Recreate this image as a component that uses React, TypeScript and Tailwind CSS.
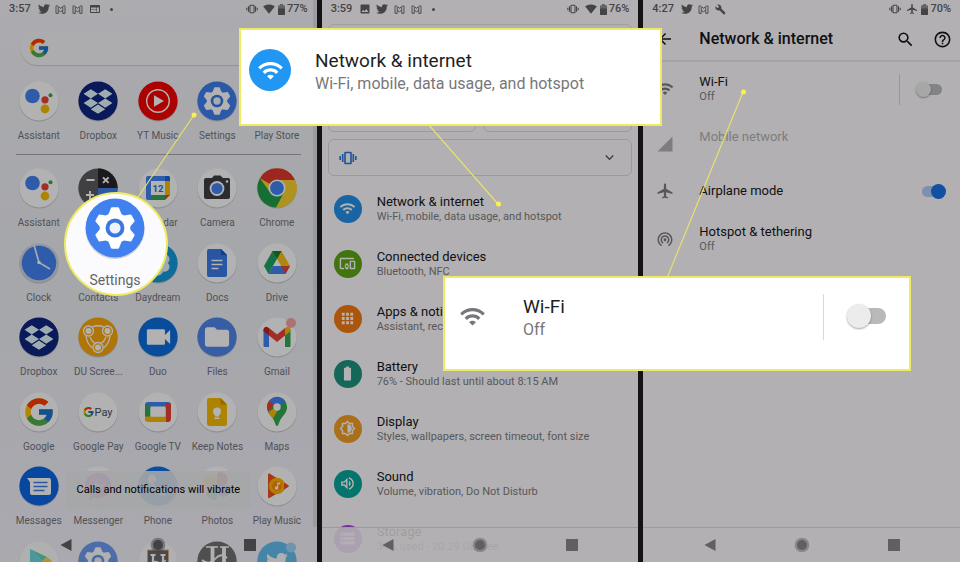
import React from 'react';
import { FaDropbox, FaTwitter } from 'react-icons/fa';
import { FcGoogle } from 'react-icons/fc';
import {
  MdAirplanemodeActive,
  MdApps,
  MdArrowBack,
  MdBatteryFull,
  MdBuild,
  MdDevicesOther,
  MdFolder,
  MdHelpOutline,
  MdImage,
  MdKeyboardArrowDown,
  MdOutlineBrightnessMedium,
  MdOutlineVolumeUp,
  MdSearch,
  MdSignalCellular4Bar,
  MdSignalWifi4Bar,
  MdStorage,
  MdVideocam,
  MdWeb,
  MdWifi,
  MdWifiTethering,
} from 'react-icons/md';

/* ---------- launcher icons, all on a 40x40 grid ---------- */

const Disc = ({ fill = '#ffffff', children }: { fill?: string; children?: React.ReactNode }) => (
  <svg viewBox="0 0 40 40" className="size-full overflow-visible" aria-hidden="true">
    <circle cx="20" cy="20.8" r="19.8" fill="#000" opacity="0.16" />
    <circle cx="20" cy="20" r="19.6" fill={fill} />
    {children}
  </svg>
);

const AssistantIcon = () => (
  <Disc>
    <circle cx="13.5" cy="15" r="7.3" fill="#4285f4" />
    <circle cx="26" cy="18.8" r="3.6" fill="#ea4335" />
    <circle cx="31.5" cy="14.3" r="2" fill="#34a853" />
    <circle cx="26" cy="28" r="4.4" fill="#fbbc04" />
  </Disc>
);

const DropboxIcon = () => (
  <Disc fill="#0d2481">
    <FaDropbox x="5.5" y="6" size={29} color="#e3f7ff" />
  </Disc>
);

const YtMusicIcon = () => (
  <Disc fill="#f80000">
    <circle cx="20" cy="20" r="11.3" fill="none" stroke="#fff" strokeWidth="1.4" />
    <path d="M16 14.2 26 20l-10 5.8z" fill="#fff" />
  </Disc>
);

const SettingsIcon = () => (
  <Disc fill="#4080ef">
    <g fill="#fff">
      <circle cx="20" cy="20" r="10.2" />
      {[0, 60, 120, 180, 240, 300].map((angle) => (
        <path key={angle} d="M15.4 11.5 17.3 6.6Q17.5 6.2 18 6.2h4Q22.5 6.2 22.7 6.6L24.6 11.5z" transform={`rotate(${angle} 20 20)`} />
      ))}
    </g>
    <circle cx="20" cy="20" r="6.3" fill="#3a78e0" />
    <circle cx="20" cy="20" r="3.7" fill="#eef3fd" />
  </Disc>
);

const PlayStoreIcon = () => (
  <Disc>
    <path d="M11 8v24l12-12z" fill="#3fd0d8" />
    <path d="M11 8l12 12 5-4z" fill="#32c8a0" />
    <path d="M11 32l12-12 5 4z" fill="#ff3b47" />
    <path d="M28 16l-5 4 5 4 5-4z" fill="#ffc900" />
  </Disc>
);

const CalculatorIcon = () => (
  <Disc fill="#5c5c60">
    <path d="M20 .4A19.6 19.6 0 0 1 39.6 20H20z" fill="#26262a" />
    <path d="M39.6 20A19.6 19.6 0 0 1 20 39.6V20z" fill="#3f7fee" />
    <g stroke="#fff" strokeWidth="1.9">
      <path d="M8.5 12h8M12 23v8M8 27h8" />
      <path d="M25 9.3l5.6 5.6M30.6 9.3 25 14.9" />
    </g>
  </Disc>
);

const CalendarIcon = () => (
  <Disc>
    <path d="M8 10q0-2 2-2h20q2 0 2 2v4H8z" fill="#4285f4" />
    <path d="M8 13h5v19h-3q-2 0-2-2z" fill="#4285f4" />
    <path d="M27 13h5v14h-5z" fill="#fbbc04" />
    <path d="M27 8h3q2 0 2 2v3h-5z" fill="#1967d2" />
    <path d="M13 27h14v5H13z" fill="#34a853" />
    <path d="M27 27h5l-5 5z" fill="#ea4335" />
    <path d="M13 13h14v14H13z" fill="#fff" />
    <text x="20" y="23.5" fontSize="9.5" fontWeight="700" textAnchor="middle" fill="#1a73e8">12</text>
  </Disc>
);

const CameraIcon = () => (
  <Disc>
    <path d="M15 10l2-2.5h6.5L26 10h5.5Q33 10 33 12v17q0 2-2 2H9q-2 0-2-2V12q0-2 2-2z" fill="#3d4045" />
    <circle cx="20" cy="20.5" r="7.4" fill="#fff" />
    <circle cx="20" cy="20.5" r="5.6" fill="#4285f4" />
    <circle cx="30" cy="13.5" r="1.3" fill="#fff" />
  </Disc>
);

const ChromeIcon = () => (
  <Disc fill="#fdd22f">
    <path d="M20 20 3 10.2A19.6 19.6 0 0 1 37 10.2L38 12H20z" fill="#e0392c" />
    <path d="M3 10.2A19.6 19.6 0 0 0 19 39.6L27.4 25 20 20 12 23z" fill="#1fa04a" />
    <path d="M20 12h18.2A19.6 19.6 0 0 1 19.500 39.6L27 24z" fill="#fdd22f" />
    <circle cx="20" cy="20" r="8.6" fill="#fff" />
    <circle cx="20" cy="20" r="6.9" fill="#4285f4" />
  </Disc>
);

const ClockIcon = () => (
  <Disc fill="#d3d8e2">
    <circle cx="20" cy="20" r="17.3" fill="#4285f4" />
    <path d="M15 2l5 17.5L31 26" fill="none" stroke="#eef2fb" strokeWidth="1.7" />
    <circle cx="20" cy="19.5" r="1.8" fill="#fff" />
  </Disc>
);

const ContactsIcon = () => (
  <Disc fill="#4285f4">
    <circle cx="20" cy="15" r="6" fill="#fff" />
    <path d="M9 30q0-8 11-8t11 8z" fill="#fff" />
  </Disc>
);

const DaydreamIcon = () => (
  <Disc fill="#159be0">
    {[0, 60, 120, 180, 240, 300].map((angle) => (
      <circle key={angle} cx="20" cy="12.5" r="5" fill="#e6f5fd" transform={`rotate(${angle} 20 20)`} />
    ))}
    <circle cx="20" cy="20" r="6" fill="#bfe4f8" />
  </Disc>
);

const DocsIcon = () => (
  <Disc>
    <path d="M10 8q0-2 2-2h12l6 6v20q0 2-2 2H12q-2 0-2-2z" fill="#3a7be8" />
    <path d="M24 6l6 6h-6z" fill="#1a56c0" />
    <path d="M14.5 17.5h11M14.5 21.5h11M14.5 25.5h7" stroke="#fff" strokeWidth="1.6" />
  </Disc>
);

const DriveIcon = () => (
  <Disc>
    <path d="M15.5 8h9L20 16 11.5 31 7 23z" fill="#1fa463" />
    <path d="M15.5 8h9L33 23h-9z" fill="#fbc116" />
    <path d="M11.500 31 16 23h17l-4.5 8z" fill="#4285f4" />
    <path d="M24 23h9l-4.5 8z" fill="#ea4335" />
    <path d="M15.5 8h9L20 16z" fill="#188038" />
    <path d="M20 16.5 24 23h-8z" fill="#fff" />
  </Disc>
);

const DuRecorderIcon = () => (
  <Disc fill="#fba90b">
    <g fill="none" stroke="#fff" strokeWidth="1.3">
      <path d="M14 10q6-2.500 12 0M8 19q1 8 6.500 12M32 19q-1 8-6.500 12M12 20q2 5 6 7M28 20q-2 5-6 7" />
      <circle cx="10.5" cy="14" r="5" />
      <circle cx="29.5" cy="14" r="5" />
      <circle cx="20" cy="30.5" r="5" />
    </g>
    <g fill="#fff">
      <circle cx="10.5" cy="14" r="3" />
      <circle cx="29.5" cy="14" r="3" />
      <circle cx="20" cy="30.5" r="3" />
    </g>
  </Disc>
);

const DuoIcon = () => (
  <Disc fill="#0b6fe0">
    <MdVideocam x="5" y="4.5" size={31} color="#fff" />
  </Disc>
);

const FilesIcon = () => (
  <Disc fill="#4f86ec">
    <MdFolder x="5.5" y="5.5" size={29} color="#fff" />
  </Disc>
);

const GmailIcon = () => (
  <Disc>
    <path d="M6.5 12v17q0 1 1 1H12V15z" fill="#4285f4" />
    <path d="M33.5 12v17q0 1-1 1H28V15z" fill="#34a853" />
    <path d="M12 11l8 6.5L28 11v7.5L20 25l-8-6.5z" fill="#ea4335" />
    <path d="M6.5 13q0-3 3-3.3L12 11v7.5l-5.5-4.3z" fill="#c5221f" />
    <path d="M33.5 13q0-3-3-3.3L28 11v7.5l5.5-4.3z" fill="#fbbc04" />
    <circle cx="34" cy="6" r="5" fill="#f5a5a2" />
  </Disc>
);

const GoogleIcon = () => (
  <Disc>
    <FcGoogle x="3.5" y="3.5" size={33} />
  </Disc>
);

const GooglePayIcon = () => (
  <Disc>
    <FcGoogle x="4.5" y="14" size={12} />
    <text x="16.5" y="24" fontSize="11" fill="#4a4c50">Pay</text>
  </Disc>
);

const GoogleTvIcon = () => (
  <Disc>
    <path d="M7 13q0-3 3-3h20q3 0 3 3v3H7z" fill="#4285f4" />
    <path d="M7 14h5.5v15H9q-2 0-2-2z" fill="#34a853" />
    <path d="M27.5 11H31q2 0 2 2v13q0 4-3 4h-2.500z" fill="#ea4335" />
    <path d="M7 24.5h20.5V30H10q-3 0-3-3z" fill="#fbbc04" />
    <path d="M12.5 14.5h15v10h-15z" fill="#fff" />
  </Disc>
);

const KeepIcon = () => (
  <Disc>
    <path d="M10 8q0-2 2-2h11.5L30 12.5V32q0 2-2 2H12q-2 0-2-2z" fill="#fbbc04" />
    <path d="M23.5 6 30 12.5h-6.5z" fill="#d99500" />
    <circle cx="20" cy="19.5" r="4" fill="#fff" />
    <path d="M18 22h4v2.5h-4zM17.5 25.5h5v1.5h-5z" fill="#fff" />
  </Disc>
);

const MapsIcon = () => (
  <Disc>
    <path d="M20 34q-1.2 0-1.6-2-1-4-4-7.5-4.5-5-4.5-9.3a10.1 10.1 0 0 1 20.2 0q0 4.3-4.5 9.3-3 3.5-4 7.5-.4 2-1.6 2z" fill="#34a853" />
    <path d="M10 15A10.1 10.1 0 0 1 12.3 8.5L17 12.5 11.5 20q-1.5-2.7-1.5-5z" fill="#ea4335" />
    <path d="M12.3 8.5A10 10 0 0 1 28.5 9.5L20 15z" fill="#4285f4" />
    <path d="M11.5 19.8 24 12.5 16 26.5q-3-3-4.5-6.7z" fill="#fbbc04" />
    <circle cx="20" cy="15" r="3.7" fill="#fff" />
  </Disc>
);

const MessagesIcon = () => (
  <Disc fill="#0b66e4">
    <path d="M8 12h22q2 0 2 2v13q0 2-2 2H13q-2 0-2-2V16z" fill="#fff" />
    <path d="M14.5 16.5h14M14.5 20.5h14M14.5 24.5h11" stroke="#3f7ee8" strokeWidth="1.5" />
  </Disc>
);

const MessengerIcon = () => (
  <Disc>
    <path d="M20 7c-8 0-13 5.5-13 12.5 0 4 1.8 7 4.5 9V34l5-2.5q1.7.5 3.5.5c8 0 13-5.5 13-12.5S28 7 20 7z" fill="#d44ae0" />
    <path d="M12 23l6-6.5 4 3.5 6-3.5-6 6.5-4-3.5z" fill="#fff" />
  </Disc>
);

const PhoneIcon = () => (
  <Disc fill="#0b6fe8">
    <circle cx="14" cy="13" r="4" fill="#fff" />
    <path d="M11 15q3 11 15 15l3-4-5-3-2 2q-5-2.5-6-7z" fill="#fff" />
  </Disc>
);

const PhotosIcon = () => (
  <Disc>
    <path d="M20 20V7a7 7 0 0 1 7 13z" fill="#ea4335" />
    <path d="M20 20h13a7 7 0 0 1-13 7z" fill="#4285f4" />
    <path d="M20 20v13a7 7 0 0 1-7-13z" fill="#34a853" />
    <path d="M20 20H7a7 7 0 0 1 13-7z" fill="#fbbc04" />
  </Disc>
);

const PlayMusicIcon = () => (
  <Disc>
    <path d="M11 8.5q0-1.5 1.5-1L31 19q1 1 0 2L12.5 32q-1.5.5-1.5-1z" fill="#ee5023" />
    <circle cx="20" cy="20" r="8.3" fill="#ffb300" />
    <circle cx="20" cy="20" r="5" fill="#ff8f00" />
    <circle cx="19.5" cy="22" r="1.7" fill="#fff" />
    <path d="M20.2 16.5h3v1.7h-2v4h-1z" fill="#fff" />
    <path d="M27 16.5 32 20l-5 3.8z" fill="#ee5023" />
  </Disc>
);

const TavernIcon = () => (
  <Disc>
    <path d="M9.5 9h21v31h-21z" fill="#3c3836" stroke="#d39a64" strokeWidth="1" />
    <path d="M12.5 14h5M15 14v18M22.5 14h5M25 14v18" stroke="#fff" strokeWidth="2.2" fill="none" />
    <path d="M12 23q4-4 8-2t8-2" stroke="#fff" strokeWidth="1.3" fill="none" />
  </Disc>
);

const HomeDesignIcon = () => (
  <Disc fill="#4a4543">
    <path d="M9 6h12M23 6h9" stroke="#fff" strokeWidth="1.3" />
    <path d="M15.5 6v24M27 6v24" stroke="#fff" strokeWidth="3.8" fill="none" />
    <path d="M5 19q7 6 13-1t12-1" stroke="#fff" strokeWidth="1.8" fill="none" />
  </Disc>
);

const TwitterIcon = () => (
  <Disc fill="#35b0ee">
    <FaTwitter x="9" y="10" size={22} color="#fff" />
    <circle cx="34" cy="6.5" r="5" fill="#7fcdf4" />
  </Disc>
);

type LauncherApp = { name: string; Icon: React.FC };

const DOCK: LauncherApp[] = [
  { name: 'Assistant', Icon: AssistantIcon },
  { name: 'Dropbox', Icon: DropboxIcon },
  { name: 'YT Music', Icon: YtMusicIcon },
  { name: 'Settings', Icon: SettingsIcon },
  { name: 'Play Store', Icon: PlayStoreIcon },
];

const APPS: LauncherApp[] = [
  { name: 'Assistant', Icon: AssistantIcon },
  { name: 'Calculator', Icon: CalculatorIcon },
  { name: 'Calendar', Icon: CalendarIcon },
  { name: 'Camera', Icon: CameraIcon },
  { name: 'Chrome', Icon: ChromeIcon },
  { name: 'Clock', Icon: ClockIcon },
  { name: 'Contacts', Icon: ContactsIcon },
  { name: 'Daydream', Icon: DaydreamIcon },
  { name: 'Docs', Icon: DocsIcon },
  { name: 'Drive', Icon: DriveIcon },
  { name: 'Dropbox', Icon: DropboxIcon },
  { name: 'DU Scree...', Icon: DuRecorderIcon },
  { name: 'Duo', Icon: DuoIcon },
  { name: 'Files', Icon: FilesIcon },
  { name: 'Gmail', Icon: GmailIcon },
  { name: 'Google', Icon: GoogleIcon },
  { name: 'Google Pay', Icon: GooglePayIcon },
  { name: 'Google TV', Icon: GoogleTvIcon },
  { name: 'Keep Notes', Icon: KeepIcon },
  { name: 'Maps', Icon: MapsIcon },
  { name: 'Messages', Icon: MessagesIcon },
  { name: 'Messenger', Icon: MessengerIcon },
  { name: 'Phone', Icon: PhoneIcon },
  { name: 'Photos', Icon: PhotosIcon },
  { name: 'Play Music', Icon: PlayMusicIcon },
];

const LAST_ROW: React.FC[] = [PlayStoreIcon, SettingsIcon, TavernIcon, HomeDesignIcon, TwitterIcon];

const SETTINGS = [
  { title: 'Network & internet', detail: 'Wi-Fi, mobile, data usage, and hotspot', Icon: MdWifi, color: 'bg-[#2590ea]' },
  { title: 'Connected devices', detail: 'Bluetooth, NFC', Icon: MdDevicesOther, color: 'bg-[#5fa816]' },
  { title: 'Apps & notifications', detail: 'Assistant, recent apps, default apps', Icon: MdApps, color: 'bg-[#f57c12]' },
  { title: 'Battery', detail: '76% - Should last until about 8:15 AM', Icon: MdBatteryFull, color: 'bg-[#1f9580]' },
  { title: 'Display', detail: 'Styles, wallpapers, screen timeout, font size', Icon: MdOutlineBrightnessMedium, color: 'bg-[#f4a027]' },
  { title: 'Sound', detail: 'Volume, vibration, Do Not Disturb', Icon: MdOutlineVolumeUp, color: 'bg-[#07a69b]' },
  { title: 'Storage', detail: '34% used - 20.29 GB free', Icon: MdStorage, color: 'bg-[#ab47d8]' },
];

/* ---------- shared pieces ---------- */

const MailGlyph = () => (
  <svg viewBox="0 0 12 10" className="h-[9px] w-[11px]" fill="none" stroke="currentColor" strokeWidth="1" aria-hidden="true">
    <path d="M1 9.3V1.5q0-1 1-.7L6 3.6 10 .8q1-.3 1 .7v7.8H8.5V5.8L6 7.5 3.5 5.8v3.5z" />
    <path d="M3.5 5.5V2.5M8.5 5.5V2.5" />
  </svg>
);

const VibrateGlyph = ({ className = 'h-[10px] w-3' }: { className?: string }) => (
  <svg viewBox="0 0 18 14" className={className} fill="none" stroke="currentColor" strokeWidth="1.6" aria-hidden="true">
    <rect x="6" y="1.5" width="6" height="11" rx="0.5" />
    <path d="M3.700 3v8M14.300 3v8M1.200 5v4M16.800 5v4" />
  </svg>
);

const BatteryGlyph = () => (
  <svg viewBox="0 0 7 11" className="mr-[2px] h-[11px] w-[7px]" fill="currentColor" aria-hidden="true">
    <path d="M2 0h3v1.2h1q1 0 1 1V10q0 1-1 1H1q-1 0-1-1V2.200q0-1 1-1h1z" opacity="0.7" />
    <path d="M0 4.500h7V10q0 1-1 1H1q-1 0-1-1z" />
  </svg>
);

const Dot = () => <span className="size-[3px] rounded-full bg-current" />;

const StatusBar = ({ time, battery, icons, network }: { time: string; battery: string; icons: React.ReactNode[]; network: React.ReactNode }) => (
  <div className="flex h-[18px] shrink-0 items-center pr-[9px] pl-[9px] text-[11px] leading-[18px] font-medium text-[#626266]">
    <span className="w-[26px]">{time}</span>
    <div className="flex">
      {icons.map((icon, i) => (
        <span key={i} className="flex w-[17px] items-center justify-center">{icon}</span>
      ))}
    </div>
    <div className="ml-auto flex items-center">
      <span className="flex w-[17px] items-center justify-center"><VibrateGlyph /></span>
      <span className="flex w-[18px] items-center justify-center">{network}</span>
      <BatteryGlyph />
      <span>{battery}</span>
    </div>
  </div>
);

const NavBar = ({ className = '' }: { className?: string }) => (
  <nav className={`absolute inset-x-0 bottom-0 flex h-[35px] items-center justify-center gap-[76px] ${className}`}>
    <button type="button" aria-label="Back" className="flex size-4 items-center justify-center">
      <svg viewBox="0 0 12 12" className="size-3" fill="currentColor"><path d="M11.5 0v12L.5 6z" /></svg>
    </button>
    <button type="button" aria-label="Home" className="flex size-4 items-center justify-center">
      <svg viewBox="0 0 16 16" className="size-4" fill="currentColor">
        <circle cx="8" cy="8" r="7.3" opacity="0.5" />
        <circle cx="8" cy="8" r="5" />
      </svg>
    </button>
    <button type="button" aria-label="Overview" className="flex size-4 items-center justify-center">
      <span className="size-3 bg-current" />
    </button>
  </nav>
);

const AppTile = ({ name, Icon }: LauncherApp) => (
  <button type="button" className="flex flex-col items-center gap-2">
    <span className="size-10"><Icon /></span>
    <span className="text-[10px] leading-[14px] whitespace-nowrap text-[#75757d]">{name}</span>
  </button>
);

/* ---------- phone screens ---------- */

const LauncherScreen = () => (
  <section aria-label="App drawer" className="relative flex h-full flex-col overflow-hidden bg-linear-to-b from-[#f6f5fa] via-[#edeff4] to-[#f3f2fb]">
    <StatusBar
      time="3:57"
      battery="77%"
      icons={[<FaTwitter size={12} />, <MailGlyph />, <MailGlyph />, <MdWeb size={12} />, <Dot />]}
      network={<MdSignalWifi4Bar size={12} />}
    />
    <div className="mx-5 mt-3 flex h-[35px] items-center rounded-full bg-white/20 px-2 shadow-[0_1px_1px_rgba(0,0,0,0.15)]">
      <FcGoogle size={22} />
      <input type="text" aria-label="Search" className="ml-2 min-w-0 flex-1 bg-transparent text-xs outline-none" />
    </div>
    <div className="mt-4 grid grid-cols-5 pr-[10px] pl-[9px]">
      {DOCK.map((app) => <AppTile key={app.name} {...app} />)}
    </div>
    <hr className="mx-4 mt-[11px] border-[#a8a8ae]" />
    <div className="mt-[13px] grid min-h-0 flex-1 grid-cols-5 grid-rows-5 items-start pr-[10px] pl-[9px]">
      {APPS.map((app) => <AppTile key={app.name} {...app} />)}
    </div>
    <div className="grid h-[21px] grid-cols-5 overflow-hidden pr-[10px] pl-[9px]">
      {LAST_ROW.map((Icon, i) => (
        <span key={i} className="mx-auto size-10"><Icon /></span>
      ))}
    </div>
    {/* scroll track */}
    <div className="absolute top-0 right-0 bottom-[35px] w-1 bg-black/8" />
    <div role="status" className="absolute inset-x-[66px] bottom-[53px] flex h-[38px] items-center justify-center rounded-sm bg-[#edeef2]/90 text-[11px] whitespace-nowrap text-black">
      Calls and notifications will vibrate
    </div>
    <NavBar className="bg-[#f3f2fb]/25 text-[#606064]" />
  </section>
);

const SettingsScreen = () => (
  <section aria-label="Settings" className="relative flex h-full flex-col overflow-hidden bg-[#fffdff]">
    <StatusBar
      time="3:59"
      battery="76%"
      icons={[<MdImage size={12} />, <FaTwitter size={12} />, <MailGlyph />, <MailGlyph />, <Dot />]}
      network={<MdSignalWifi4Bar size={12} />}
    />
    <div className="flex flex-col gap-[7px] px-[6px] pt-[6px]">
      <div className="h-[38px] rounded-md border border-[#e6e4e7]" />
      <div className="grid grid-cols-2 gap-[7px]">
        <div className="h-[63px] rounded-md border border-[#dedce0]" />
        <div className="h-[63px] rounded-md border border-[#dedce0]" />
      </div>
      <button type="button" aria-label="Ringer mode: vibrate" className="flex h-[37px] items-center justify-between rounded-md border border-[#dedce0] pr-[13px] pl-[10px]">
        <VibrateGlyph className="h-[14px] w-[18px] text-[#2b74dd]" />
        <MdKeyboardArrowDown size={17} className="text-[#5c5c60]" />
      </button>
    </div>
    <ul className="mt-[5px]">
      {SETTINGS.map(({ title, detail, Icon, color }) => (
        <li key={title} className="flex h-[55px] items-center gap-[15px] pl-3">
          <span className={`flex size-7 shrink-0 items-center justify-center rounded-full text-white ${color}`}>
            <Icon size={17} />
          </span>
          <div className="whitespace-nowrap">
            <p className="text-[13px] leading-4 text-[#17171a]">{title}</p>
            <p className="text-[11px] leading-[14px] text-[#7e7e82]">{detail}</p>
          </div>
        </li>
      ))}
    </ul>
    <NavBar className="border-t border-[#e0dee1] bg-[#fffdff]/88 text-[#8a888c]" />
  </section>
);

const NetworkRow = ({ title, detail, icon, children, className = 'h-[55px]' }: { title: string; detail?: string; icon: React.ReactNode; children?: React.ReactNode; className?: string }) => (
  <li className={`flex items-center pr-3 pl-[13px] ${className}`}>
    <span className="flex w-[18px] shrink-0 justify-center">{icon}</span>
    <div className="ml-[25px] flex-1">
      <p className="text-[13px] leading-4">{title}</p>
      {detail !== undefined && <p className="h-[14px] text-[11px] leading-[14px] text-[#7e7e82]">{detail}</p>}
    </div>
    {children}
  </li>
);

const NetworkScreen = () => (
  <section aria-label="Network and internet" className="relative flex h-full flex-col overflow-hidden bg-[#fffdff] text-[#17171a]">
    <StatusBar
      time="4:27"
      battery="70%"
      icons={[<FaTwitter size={12} />, <MailGlyph />, <MdBuild size={11} />]}
      network={<MdAirplanemodeActive size={12} />}
    />
    <header className="flex h-11 items-center border-b-2 border-[#ebe9ec] pr-2 pl-[13px]">
      <button type="button" aria-label="Back"><MdArrowBack size={18} /></button>
      <h1 className="ml-[25px] flex-1 text-[16px] leading-5 font-medium">Network &amp; internet</h1>
      <button type="button" aria-label="Search" className="mr-[18px]"><MdSearch size={19} /></button>
      <button type="button" aria-label="Help"><MdHelpOutline size={19} /></button>
    </header>
    <ul>
      <NetworkRow title="Wi-Fi" detail="Off" className="h-[54px]" icon={<MdWifi size={18} className="text-[#7e7e82]" />}>
        <span className="mr-[18px] h-[31px] w-px bg-[#d8d7da]" />
        <input
          type="checkbox"
          role="switch"
          aria-label="Wi-Fi"
          className="relative mr-[6px] h-[11px] w-6 appearance-none rounded-full bg-[#bcbbbe] before:absolute before:-top-[2px] before:-left-[2px] before:size-[15px] before:rounded-full before:bg-[#efeff0] before:shadow-[0_1px_2px_rgba(0,0,0,0.35)]"
        />
      </NetworkRow>
      <NetworkRow title="Mobile network" detail="" className="h-[55px] text-[#b4b3b6]" icon={<MdSignalCellular4Bar size={18} />} />
      <NetworkRow title="Airplane mode" className="h-10" icon={<MdAirplanemodeActive size={18} className="text-[#7e7e82]" />}>
        <input
          type="checkbox"
          role="switch"
          aria-label="Airplane mode"
          defaultChecked
          className="relative mr-1 h-[11px] w-[22px] appearance-none rounded-full bg-[#b4cef7] before:absolute before:-top-[2px] before:-right-[2px] before:size-[15px] before:rounded-full before:bg-[#1a73e8]"
        />
      </NetworkRow>
      <NetworkRow title="Hotspot & tethering" detail="Off" icon={<MdWifiTethering size={18} className="text-[#7e7e82]" />} />
    </ul>
    <NavBar className="border-t border-[#e0dee1] text-[#8a888c]" />
  </section>
);

/* ---------- magnified callouts over the phones ---------- */

const Callouts = () => (
  <>
    <svg className="pointer-events-none absolute inset-0 size-full" stroke="#e6e16e" strokeWidth="1.2" fill="#fff04a" aria-hidden="true">
      <path d="M194 115 136 200M428 124l70 80M743 92l-76 186" />
      <g stroke="none">
        <circle cx="194" cy="115" r="2.5" />
        <circle cx="498.5" cy="204" r="2.5" />
        <circle cx="743.5" cy="92" r="2.5" />
      </g>
    </svg>

    <div className="absolute top-[192px] left-[64px] flex size-[104px] flex-col items-center rounded-full border-2 border-[#eeea62] bg-[#fbfbfe] pt-1 pr-[2px]">
      <span className="size-[60px]"><SettingsIcon /></span>
      <span className="mt-3 text-[14px] leading-5 text-[#66666a]">Settings</span>
    </div>

    <div className="absolute top-[28px] left-[239px] flex h-[98px] w-[423px] gap-6 border-2 border-[#eeea62] bg-white pl-2">
      <span className="mt-[19px] flex size-[42px] items-center justify-center rounded-full bg-[#2196f3] text-white">
        <MdWifi size={27} />
      </span>
      <div className="mt-[19px]">
        <p className="text-[19px] leading-6 text-[#1f1f22]">Network &amp; internet</p>
        <p className="text-[16px] leading-[22px] text-[#77777b]">Wi-Fi, mobile, data usage, and hotspot</p>
      </div>
    </div>

    <div className="absolute top-[276px] left-[443px] flex h-[95px] w-[468px] border-2 border-[#eeea62] bg-white pr-[23px] pl-[14px]">
      <MdWifi size={27} className="mt-[25px] text-[#77777b]" />
      <div className="mt-[17px] ml-[37px] flex-1">
        <p className="text-[19px] leading-6 text-[#1f1f22]">Wi-Fi</p>
        <p className="text-[16px] leading-[22px] text-[#77777b]">Off</p>
      </div>
      <span className="mt-4 mr-[27px] h-[46px] w-px bg-[#d8d8dc]" />
      <input
        type="checkbox"
        role="switch"
        aria-label="Wi-Fi, magnified"
        className="relative mt-[30px] h-4 w-[35px] appearance-none rounded-full bg-[#b9b9bb] before:absolute before:-top-1 before:-left-1 before:size-6 before:rounded-full before:bg-[#ececed] before:shadow-[0_1px_2px_rgba(0,0,0,0.35)]"
      />
    </div>
  </>
);

export default function App() {
  return (
    <main className="relative h-screen overflow-hidden bg-[#1c1a1e] font-[Roboto,'Noto_Sans',sans-serif]">
      <div className="grid h-full grid-cols-3 gap-[5px]">
        <LauncherScreen />
        <SettingsScreen />
        <NetworkScreen />
      </div>
      <div className="pointer-events-none absolute inset-0 bg-black/30" />
      <Callouts />
    </main>
  );
}
